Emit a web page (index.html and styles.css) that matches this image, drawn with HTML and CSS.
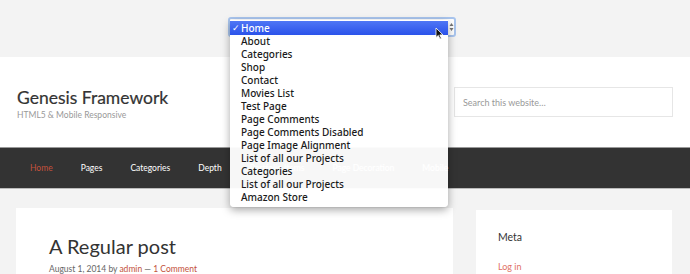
FILE: index.html
```html
<!DOCTYPE html>
<html lang="en">
<head>
<meta charset="UTF-8">
<meta name="viewport" content="width=device-width, initial-scale=1.0">
<title>Genesis Framework</title>
<link rel="stylesheet" href="styles.css">
</head>
<body>

<div class="topbar"></div>

<header class="site-header">
  <div class="title-area">
    <p class="site-title">Genesis Framework</p>
    <p class="site-description">HTML5 &amp; Mobile Responsive</p>
  </div>
  <form class="search-form">
    <input type="search" placeholder="Search this website…">
  </form>
</header>

<nav class="nav-primary">
  <a href="#" class="current">Home</a>
  <a href="#">Pages</a>
  <a href="#">Categories</a>
  <a href="#">Depth</a>
  <a href="#">Portfolio Items</a>
  <a href="#">Page Decoration</a>
  <a href="#">Mobile</a>
</nav>

<div class="content-wrap">
  <main class="entry">
    <h1 class="entry-title">A Regular post</h1>
    <p class="entry-meta">August 1, 2014 by <a href="#">admin</a> — <a href="#">1 Comment</a></p>
  </main>
  <aside class="sidebar">
    <h4 class="widget-title">Meta</h4>
    <ul class="widget-list">
      <li><a href="#">Log in</a></li>
    </ul>
  </aside>
</div>

<!-- mobile menu select, opened -->
<div class="menu-select">
  <div class="select-box">
    <svg class="stepper" width="5" height="10" viewBox="0 0 5 10">
      <path d="M0.5 4 L2.5 1 L4.5 4 Z M0.5 6 L2.5 9 L4.5 6 Z" fill="#777"/>
    </svg>
  </div>
  <ul class="select-list">
    <li class="selected"><span class="check">✓</span>Home</li>
    <li>About</li>
    <li>Categories</li>
    <li>Shop</li>
    <li>Contact</li>
    <li>Movies List</li>
    <li>Test Page</li>
    <li>Page Comments</li>
    <li>Page Comments Disabled</li>
    <li>Page Image Alignment</li>
    <li>List of all our Projects</li>
    <li>Categories</li>
    <li>List of all our Projects</li>
    <li>Amazon Store</li>
  </ul>
  <svg class="cursor" width="9" height="13" viewBox="0 0 9 13">
    <path d="M1 1 L1 10.5 L3.3 8.4 L5 12 L6.4 11.4 L4.8 7.9 L8 7.9 Z" fill="#111" stroke="#fff" stroke-width="0.8"/>
  </svg>
</div>

</body>
</html>
```

FILE: styles.css
```css
body {
  margin: 0;
  background: #f3f3f3;
  font-family: Lato, "Open Sans", sans-serif;
  color: #333;
}

a {
  text-decoration: none;
}

.topbar {
  height: 57px;
}

/* header */
.site-header {
  display: flex;
  justify-content: space-between;
  align-items: center;
  height: 90px;
  padding: 0 17px;
  background: #fff;
}

.title-area {
  margin-top: 4px;
}

.site-title {
  margin: 0;
  font-size: 17.5px;
  line-height: 22px;
  color: #333;
  -webkit-text-stroke: 0.2px #333;
}

.site-description {
  margin: 0;
  font-size: 8.5px;
  line-height: 12px;
  color: #999;
}

.search-form input {
  box-sizing: border-box;
  width: 219px;
  height: 30px;
  padding: 0 8px;
  border: 1px solid #e6e6e6;
  font-family: Lato, sans-serif;
  font-size: 9px;
  color: #999;
  background: #fff;
  -webkit-appearance: none;
  appearance: none;
  outline: none;
}

.search-form input::placeholder {
  color: #999;
}

/* nav */
.nav-primary {
  display: flex;
  height: 40px;
  align-items: center;
  padding-left: 16px;
  background: #333;
  border-top: 1px solid #999;
  border-bottom: 1px solid #bbb;
}

.nav-primary a {
  padding: 0 14px;
  font-size: 8.5px;
  color: #fff;
}

.nav-primary a.current {
  color: #c3513c;
}

/* content */
.content-wrap {
  display: flex;
  align-items: flex-start;
  gap: 23px;
  padding: 19px 18px 0 16px;
}

.entry {
  width: 437px;
  height: 80px;
  box-sizing: border-box;
  padding: 26px 33px 0;
  background: #fff;
}

.entry-title {
  margin: 0 0 6px;
  font-size: 20px;
  line-height: 24px;
  font-weight: 400;
  color: #333;
}

.entry-meta {
  margin: 0;
  font-size: 8.5px;
  color: #666;
}

.entry-meta a {
  color: #c3513c;
}

.sidebar {
  width: 196px;
  height: 80px;
  box-sizing: border-box;
  margin-top: 2px;
  padding: 21px 22px 0;
  background: #fff;
}

.widget-title {
  margin: 0 0 11px;
  font-size: 10.5px;
  font-weight: 400;
  color: #333;
}

.widget-list {
  margin: 0;
  padding: 0 0 6px;
  list-style: none;
  border-bottom: 1px solid #eee;
}

.widget-list a {
  font-size: 9px;
  color: #e07064;
}

/* opened select menu */
.menu-select {
  position: absolute;
  left: 228px;
  top: 17px;
  width: 228px;
}

.select-box {
  box-sizing: border-box;
  height: 20px;
  border: 2px solid #a9c5ee;
  border-radius: 3px;
  background: #fff;
  position: relative;
}

.stepper {
  position: absolute;
  right: 0;
  top: 3px;
}

.select-list {
  position: absolute;
  left: 2px;
  top: 3px;
  width: 218px;
  margin: 0;
  padding: 1px 0 3px;
  list-style: none;
  background: rgba(255, 255, 255, 0.965);
  border-radius: 0 0 4px 4px;
  box-shadow: 0 3px 9px rgba(0, 0, 0, 0.35);
  font-family: "Noto Sans", "DejaVu Sans", sans-serif;
  font-size: 10px;
  font-weight: 500;
  color: #1a1a1a;
}

.select-list li {
  height: 13px;
  line-height: 13px;
  padding-left: 11px;
  white-space: nowrap;
}

.select-list li.selected {
  height: 14px;
  line-height: 14px;
  color: #fff;
  background: linear-gradient(#4f76f5, #2a52ea);
  position: relative;
}

.check {
  position: absolute;
  left: 2px;
  font-size: 9px;
}

.cursor {
  position: absolute;
  left: 207px;
  top: 10px;
}
```
